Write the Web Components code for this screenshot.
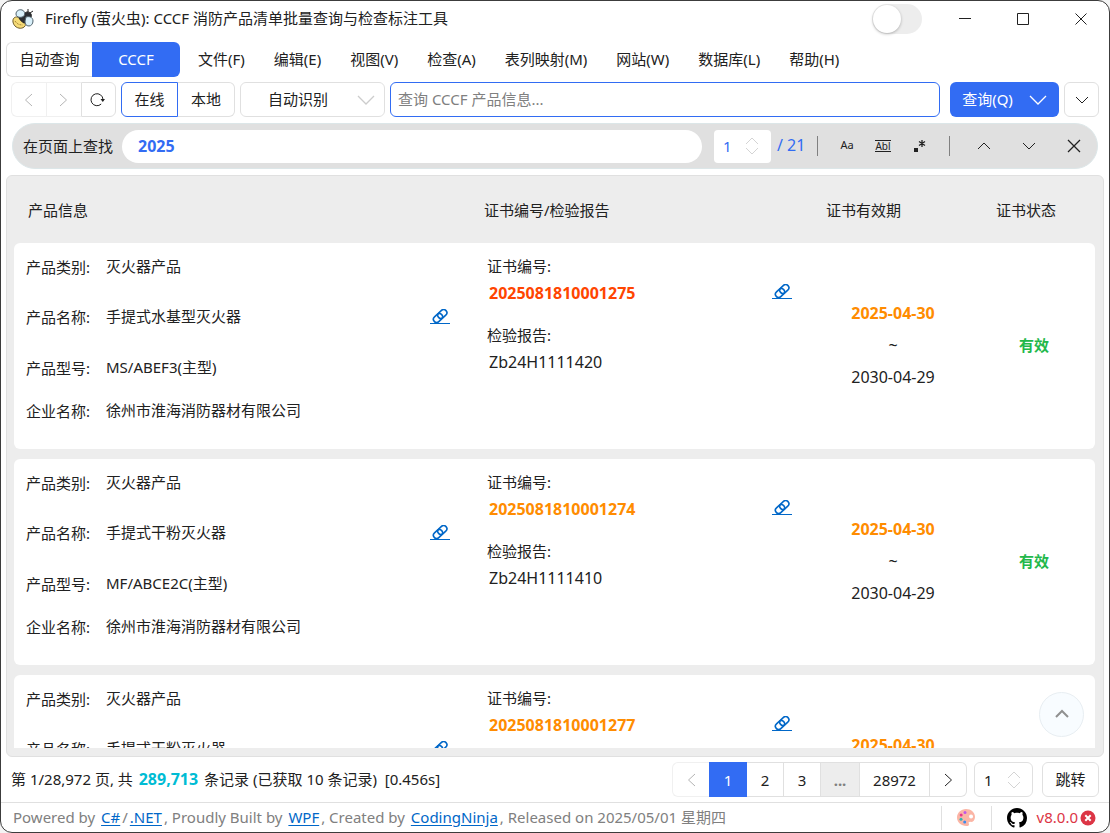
<!DOCTYPE html>
<html lang="zh-CN">
<head>
<meta charset="utf-8">
<meta name="viewport" content="width=device-width, initial-scale=1">
<title>Firefly (萤火虫): CCCF 消防产品清单批量查询与检查标注工具</title>
<style>
  html, body { margin: 0; height: 100%; background: #f4f4f4; }
  body { font: 15px/24px "Noto Sans", "Noto Sans CJK SC", sans-serif; color: #212121; }
</style>
</head>
<body>
<app-window>
  <title-bar slot="top">Firefly (萤火虫): CCCF 消防产品清单批量查询与检查标注工具</title-bar>
  <menu-bar slot="top"></menu-bar>
  <query-bar slot="top"></query-bar>
  <find-bar slot="top">在页面上查找</find-bar>
  <result-list></result-list>
  <page-bar slot="bottom"></page-bar>
  <status-bar slot="bottom"></status-bar>
</app-window>
<script>
const base = `
  *, :host { box-sizing: border-box; }
  :host { display: block; --blue: #326cf3; --line: #e0e0e0; --link: #0067c8; }
  button, input, select { font: inherit; color: inherit; margin: 0; padding: 0; background: #fff; border: 1px solid var(--line); border-radius: 6px; outline: none; }
  button { display: flex; align-items: center; justify-content: center; white-space: nowrap; }
  svg { display: block; fill: none; stroke: currentColor; flex: none; }
  svg.flat { stroke: none; }
  a { color: var(--link); text-underline-offset: 2px; }
  input[type=number] { appearance: textfield; -moz-appearance: textfield; }
  input::-webkit-inner-spin-button { display: none; }
`;
function define(name, css, html) {
  customElements.define(name, class extends HTMLElement {
    constructor() {
      super();
      const root = this.attachShadow({ mode: 'open' });
      root.innerHTML = `<style>${base}${css}</style>${typeof html === 'function' ? html(this) : html}`;
    }
  });
}
const chevron = {
  left: '<svg width="9" height="14" viewBox="0 0 9 14"><path d="M8 1 1.500 7 8 13"/></svg>',
  right: '<svg width="9" height="14" viewBox="0 0 9 14"><path d="M1 1 7.500 7 1 13"/></svg>',
  up: '<svg width="14" height="8" viewBox="0 0 14 8"><path d="M1 7 7 1l6 6"/></svg>',
  down: '<svg width="14" height="8" viewBox="0 0 14 8"><path d="M1 1l6 6 6-6"/></svg>',
  wide: '<svg width="18" height="10" viewBox="0 0 18 10" stroke-width="1.300"><path d="M1 1l8 8 8-8"/></svg>'
};

define('app-window', `
  :host { display: flex; flex-direction: column; height: 100vh; min-height: 480px; background: #fff; border: 1px solid #3c3c3c; border-radius: 12px; overflow: hidden; }
  main { flex: 1; min-height: 0; display: flex; flex-direction: column; padding: 6px 5px 0; }
`, '<slot name="top"></slot><main><slot></slot></main><slot name="bottom"></slot>');

define('title-bar', `
  :host { display: flex; align-items: center; height: 36px; padding-left: 11px; }
  h1 { flex: 1; margin: 0 0 0 11px; padding-bottom: 2px; font-size: 15px; font-weight: 400; line-height: 24px; white-space: nowrap; }
  input { appearance: none; width: 50px; height: 30px; border: 0; border-radius: 15px; background: #ededed; padding: 1px; margin-right: 14px; }
  input::before { content: ""; display: block; width: 28px; height: 28px; border-radius: 14px; background: #fff; box-shadow: 0 1px 3px #0004; }
  button { width: 58px; height: 36px; border: 0; background: none; }
  button:last-child { margin-right: -1px; }
`, `
  <svg width="22" height="22" viewBox="0 0 22 22" stroke-width="1">
    <path fill="#f6dc78" stroke="#6b5a2a" d="M2 10c2-2 5-1 8 2 3 3 4 5 3 6-2 3-7 3-10 0-2-2-3-6-1-8z"/>
    <path stroke="#a9883a" stroke-dasharray="2 1" d="M3 13c2 3 4 4 8 4"/>
    <path fill="#2c2e33" stroke="#222" d="M7 10c0-1 4-2 6-5 2-2 5-1 6 1s0 4-2 5c-2 0-3 3-5 4-2-1-4-3-5-5z"/>
    <path fill="#d9f0fa" stroke="#50626c" d="M4 6c0-3 3-5 6-4 3 1 3 4 2 6-2 2-8 2-8-2z"/>
    <path fill="#d9f0fa" stroke="#50626c" d="M14 9c3-1 7 0 7 4 0 3-2 5-4 5-3 0-4-2-4-5z"/>
    <path stroke="#222" d="M16 4V1M18 5l3-2"/>
  </svg>
  <h1><slot></slot></h1>
  <input type="checkbox" role="switch" aria-label="主题切换">
  <button aria-label="最小化"><svg width="12" height="12" viewBox="0 0 12 12"><path d="M0 5.500h12"/></svg></button>
  <button aria-label="最大化"><svg width="12" height="12" viewBox="0 0 12 12"><path d="M.5.5h11v11H.5z"/></svg></button>
  <button aria-label="关闭"><svg width="12" height="12" viewBox="0 0 12 12"><path d="M.5.5l11 11m0-11l-11 11"/></svg></button>
`);

define('menu-bar', `
  :host { display: flex; height: 35px; margin: 5px 5px 0; }
  nav { display: flex; margin-left: 4px; }
  button { padding-bottom: 2px; }
  nav button { border: 0; padding: 0 15px 2px 14px; background: none; }
  .auto { width: 86px; border-radius: 6px 0 0 6px; border-right: 0; }
  .cccf { width: 88px; border: 0; border-radius: 0 6px 6px 0; background: var(--blue); color: #fff; }
`, `
  <button class="auto">自动查询</button><button class="cccf">CCCF</button>
  <nav>${['文件(F)', '编辑(E)', '视图(V)', '检查(A)', '表列映射(M)', '网站(W)', '数据库(L)', '帮助(H)'].map(t => `<button>${t}</button>`).join('')}</nav>
`);

define('query-bar', `
  :host { display: flex; height: 35px; margin: 5px 10px 0; gap: 5px; }
  .group { display: flex; }
  .nav button { width: 35px; padding-right: 2px; }
  .nav button:disabled { color: #b4b4b4; border-color: #f0f0f0; }
  .group button:not(:last-child) { border-radius: 6px 0 0 6px; border-right: 0; }
  .group button:last-child { border-radius: 0 6px 6px 0; }
  .group .mid { border-radius: 0 !important; }
  .src button { width: 57px; padding-bottom: 2px; }
  .src .on { border: 1px solid var(--blue) !important; }
  .src button:last-child { border-left: 0; }
  .kind { display: grid; width: 145px; align-items: center; }
  .kind > * { grid-area: 1 / 1; }
  select { appearance: none; height: 35px; width: 100%; padding: 0 0 2px 27px; }
  .kind svg { justify-self: end; margin-right: 10px; color: #ccc; pointer-events: none; }
  .search { flex: 1; min-width: 120px; padding: 0 7px 2px; border-color: var(--blue); }
  .search::placeholder { color: #808080; opacity: 1; }
  .go { width: 109px; margin-left: 5px; border: 0; background: var(--blue); color: #fff; gap: 16px; }
  .go span { padding-bottom: 2px; }
  .more { width: 35px; }
`, `
  <div class="group nav">
    <button disabled aria-label="后退">${chevron.left}</button>
    <button class="mid" disabled aria-label="前进">${chevron.right}</button>
    <button aria-label="刷新"><svg width="15" height="15" viewBox="0 0 15 15"><path d="M11.200 12A6 6 0 1 1 13 7.500"/><path d="M10.500 7h4.500l-2.200 3z" fill="currentColor" stroke="none"/></svg></button>
  </div>
  <div class="group src"><button class="on">在线</button><button>本地</button></div>
  <div class="kind"><select aria-label="查询类型"><option>自动识别</option></select>${chevron.wide}</div>
  <input class="search" type="text" aria-label="查询" placeholder="查询 CCCF 产品信息...">
  <button class="go"><span>查询(Q)</span>${chevron.wide}</button>
  <button class="more" aria-label="更多">${chevron.down}</button>
`);

define('spin-box', `
  :host { display: grid; align-items: center; }
  * { grid-area: 1 / 1; }
  input { width: 100%; height: 100%; padding-left: 9px; border: var(--edge, 1px solid var(--line)); border-radius: var(--round, 6px); }
  svg { justify-self: end; margin-right: 12px; color: #d4d4d4; pointer-events: none; }
`, el => `<input type="number" value="1" aria-label="${el.getAttribute('label')}"><svg width="14" height="18" viewBox="0 0 14 18"><path d="M1 7l6-6 6 6M1 11l6 6 6-6"/></svg>`);

define('find-bar', `
  :host { display: flex; align-items: center; height: 46px; margin: 6px 11px 0; padding: 0 1px 0 10px; border-radius: 23px; background: #e0e0e0; border: 1px solid #dce6e8; }
  label { white-space: nowrap; }
  #find { flex: 1; min-width: 80px; height: 33px; margin: 0 12px 0 9px; padding: 0 16px; border: 0; border-radius: 17px; color: var(--blue); font-size: 16px; font-weight: 700; }
  spin-box { width: 57px; height: 33px; color: var(--blue); --edge: 0; --round: 4px; }
  .total { width: 46px; padding: 0 0 2px 6px; color: var(--blue); font-size: 16px; }
  hr { width: 1px; height: 20px; margin: 0 12px 0 0; border: 0; background: #808080; }
  hr + button { margin-left: -1px; }
  button { width: 36px; height: 33px; border: 0; background: none; }
  .step { width: 45px; }
  .case { font-size: 11px; padding-bottom: 2px; }
  .word span { font-size: 10px; line-height: 10px; border: solid; border-width: 1px 0; }
  .gap { margin-right: 12px; }
`, `
  <label for="find"><slot></slot></label>
  <input id="find" type="text" value="2025">
  <spin-box label="当前匹配"></spin-box>
  <span class="total">/ 21</span>
  <hr>
  <button class="case">Aa</button>
  <button class="word"><span>Abl</span></button>
  <button class="gap" aria-label="正则表达式"><svg width="13" height="13" viewBox="0 0 13 13"><path d="M1 8h4v4H1z" fill="currentColor" stroke="none"/><path d="M9 0v7M6 1.500l6 4M12 1.500l-6 4" stroke-width="1.300"/></svg></button>
  <hr>
  <button class="step" aria-label="上一个">${chevron.up}</button>
  <button class="step" aria-label="下一个">${chevron.down}</button>
  <button class="step" aria-label="关闭查找"><svg width="14" height="14" viewBox="0 0 14 14" stroke-width="1.300"><path d="M1 1l12 12m0-12L1 13"/></svg></button>
`);

define('chain-link', `
  a { display: block; width: 20px; border-bottom: 1px solid var(--link); }
  svg { margin-left: 2px; }
`, `<a href="#" aria-label="打开链接"><svg width="16" height="14" viewBox="0 0 16 14" stroke-width="1.600"><rect x="-5" y="-3.200" width="10" height="6.400" rx="3.200" transform="translate(10.300 5) rotate(-42)"/><rect x="-5" y="-3.200" width="10" height="6.400" rx="3.200" transform="translate(6 9) rotate(-42)"/></svg></a>`);

define('product-info', `
  dl { display: grid; grid-template: 48px 52px 50px 36px / 80px 1fr 20px; align-items: center; margin: 0; padding: 0 26px 20px 12px; }
  dt { grid-column: 1; }
  dd { margin: 0; padding-bottom: 2px; }
  chain-link { grid-area: 2 / 3; padding-bottom: 2px; }
`, el => `<dl>
  <dt>产品类别:</dt><dd>灭火器产品</dd>
  <dt>产品名称:</dt><dd>${el.getAttribute('name')}</dd><chain-link></chain-link>
  <dt>产品型号:</dt><dd>${el.getAttribute('model')}</dd>
  <dt>企业名称:</dt><dd>徐州市淮海消防器材有限公司</dd>
</dl>`);

define('cert-info', `
  :host { padding: 11px 14px 0 11px; }
  div { display: flex; justify-content: space-between; align-items: center; height: 30px; padding-left: 2px; margin-bottom: 15px; font-size: 16px; }
  chain-link { padding-bottom: 4px; }
  b { color: var(--tone); }
`, el => `<span>证书编号:</span><div><b>${el.getAttribute('cert')}</b><chain-link></chain-link></div>
<span>检验报告:</span><div>${el.getAttribute('report')}</div>`);

const records = [
  { name: '手提式水基型灭火器', model: 'MS/ABEF3(主型)', cert: '2025081810001275', report: 'Zb24H1111420', tone: '#ff4500' },
  { name: '手提式干粉灭火器', model: 'MF/ABCE2C(主型)', cert: '2025081810001274', report: 'Zb24H1111410', tone: '#ff8c00' },
  { name: '手提式干粉灭火器', model: 'MF/ABCE3(主型)', cert: '2025081810001277', report: 'Zb24H1111430', tone: '#ff8c00' }
];
define('result-list', `
  :host { position: relative; flex: 1; min-height: 0; padding: 0 8px 8px 7px; border: 1px solid var(--line); border-radius: 6px; background: #ededed; }
  .view { height: 100%; overflow: hidden; }
  table { width: 100%; table-layout: fixed; border-spacing: 0 10px; }
  th { height: 47px; padding: 0; font-weight: 400; text-align: left; }
  th:nth-child(1) { padding-left: 14px; }
  th:nth-child(2) { width: 330px; padding-left: 8px; }
  th:nth-child(3) { width: 174px; padding-left: 20px; }
  th:nth-child(4) { width: 115px; padding-left: 16px; }
  td { height: 206px; padding: 0; background: #fff; vertical-align: top; }
  td:first-child { border-radius: 6px 0 0 6px; }
  td:last-child { border-radius: 0 6px 6px 0; }
  .mid { padding-bottom: 2px; vertical-align: middle; text-align: center; font-size: 16px; line-height: 32px; }
  .mid:last-child { padding-right: 7px; }
  .mid b { color: #ff8c00; }
  .ok b { color: #23b84b; font-size: 15px; }
  .top { position: absolute; right: 19px; bottom: 19px; width: 45px; height: 45px; border-radius: 50%; border-color: #e8eef2; background: #f8fcff; color: #909090; padding-bottom: 3px; }
`, `<div class="view"><table>
  <thead><tr><th>产品信息</th><th>证书编号/检验报告</th><th>证书有效期</th><th>证书状态</th></tr></thead>
  <tbody>${records.map(r => `<tr>
    <td><product-info name="${r.name}" model="${r.model}"></product-info></td>
    <td><cert-info cert="${r.cert}" report="${r.report}" style="--tone:${r.tone}"></cert-info></td>
    <td class="mid"><b>2025-04-30</b><br>~<br>2030-04-29</td>
    <td class="mid ok"><b>有效</b></td></tr>`).join('')}</tbody>
</table></div>
<button class="top" aria-label="回到顶部"><svg width="14" height="9" viewBox="0 0 14 9" stroke-width="2"><path d="M1 8l6-6 6 6"/></svg></button>`);

define('page-bar', `
  :host { display: flex; align-items: center; height: 35px; margin: 5px 10px; }
  p { flex: 1; margin: 0; padding-bottom: 2px; white-space: pre; }
  b { margin: 0 2px; color: #00bcd4; font-size: 16px; }
  nav { display: flex; }
  button { height: 35px; }
  nav button { width: 37px; border-radius: 0; border-left: 0; }
  nav button:first-child { border: 1px solid #f0f0f0; border-right: 0; border-radius: 6px 0 0 6px; color: #b4b4b4; }
  nav button:last-child { border-radius: 0 6px 6px 0; }
  nav .on { width: 38px; border: 0; background: var(--blue); color: #fff; }
  nav .dots { width: 39px; background: #ededed; color: #808080; font-weight: 700; }
  nav .last { width: 70px; }
  spin-box { width: 59px; height: 35px; margin: 0 9px 0 7px; }
  .jump { width: 57px; padding-bottom: 2px; }
`, `
  <p>第 1/28,972 页, 共 <b>289,713</b> 条记录 (已获取 10 条记录)  [0.456s]</p>
  <nav aria-label="分页"><button disabled aria-label="上一页">${chevron.left}</button><button class="on">1</button><button>2</button><button>3</button><button class="dots">...</button><button class="last">28972</button><button aria-label="下一页">${chevron.right}</button></nav>
  <spin-box label="页码"></spin-box>
  <button class="jump">跳转</button>
`);

define('status-bar', `
  :host { display: flex; align-items: center; height: 30px; padding: 0 13px 0 12px; border-top: 1px solid var(--line); color: #808080; }
  p { flex: 1; margin: 0; padding-bottom: 2px; white-space: nowrap; }
  p a { margin: 0 2px; }
  hr { width: 1px; height: 24px; margin: 0; border: 0; background: var(--line); }
  .paint { width: 49px; height: 24px; border: 0; }
  .hub { margin: 0 10px 0 15px; color: #000; }
  .ver { padding-bottom: 2px; color: #dc3545; margin-right: 2px; }
`, `
  <p>Powered by <a href="#">C#</a>/<a href="#">.NET</a>, Proudly Built by <a href="#">WPF</a>, Created by <a href="#">CodingNinja</a>, Released on 2025/05/01 星期四</p>
  <hr>
  <button class="paint" aria-label="主题颜色"><svg class="flat" width="18" height="17" viewBox="0 0 18 17"><path fill="#fbb5a5" fill-rule="evenodd" d="M9 0c5 0 9 3.500 9 8 0 3-2 5-4 5-2-.5-3 .5-2 2 .5 1.500-.8 2-2.500 2C4 17 0 13 0 8.500S4 0 9 0zm5 5.500a2 2 0 1 0 .1 4 2 2 0 0 0-.1-4z"/><circle cx="8" cy="3.500" r="1.500" fill="#c056e8"/><circle cx="4.200" cy="6" r="1.500" fill="#e83a8c"/><circle cx="4" cy="10.200" r="1.500" fill="#30b8b0"/><circle cx="7.700" cy="13" r="1.500" fill="#3a8cf0"/></svg></button>
  <hr>
  <a class="hub" href="#" aria-label="GitHub"><svg class="flat" width="20" height="20" viewBox="0 0 16 16"><path fill="currentColor" d="M8 0C3.580 0 0 3.580 0 8c0 3.540 2.290 6.530 5.470 7.590.4.070.55-.17.55-.38 0-.19-.01-.82-.01-1.490-2.010.37-2.530-.49-2.690-.94-.09-.23-.48-.94-.82-1.130-.28-.15-.68-.52-.01-.53.63-.01 1.080.58 1.230.82.72 1.210 1.870.87 2.330.66.07-.52.28-.87.51-1.070-1.780-.2-3.640-.89-3.640-3.950 0-.87.31-1.590.82-2.150-.08-.2-.36-1.020.08-2.120 0 0 .67-.21 2.200.82.64-.18 1.320-.27 2-.27.68 0 1.360.09 2 .27 1.530-1.040 2.200-.82 2.200-.82.44 1.100.16 1.920.08 2.120.51.56.82 1.270.82 2.150 0 3.070-1.870 3.750-3.650 3.950.29.25.54.73.54 1.480 0 1.070-.01 1.930-.01 2.200 0 .21.15.46.55.38A8.012 8.012 0 0 0 16 8c0-4.420-3.580-8-8-8z"/></svg></a>
  <span class="ver">v8.0.0</span>
  <svg class="flat" width="16" height="16" viewBox="0 0 16 16"><circle cx="8" cy="8" r="7.500" fill="#dc3545"/><path d="M5.300 5.300l5.400 5.400m0-5.400l-5.400 5.400" stroke="#fff" stroke-width="2"/></svg>
`);
</script>
</body>
</html>
